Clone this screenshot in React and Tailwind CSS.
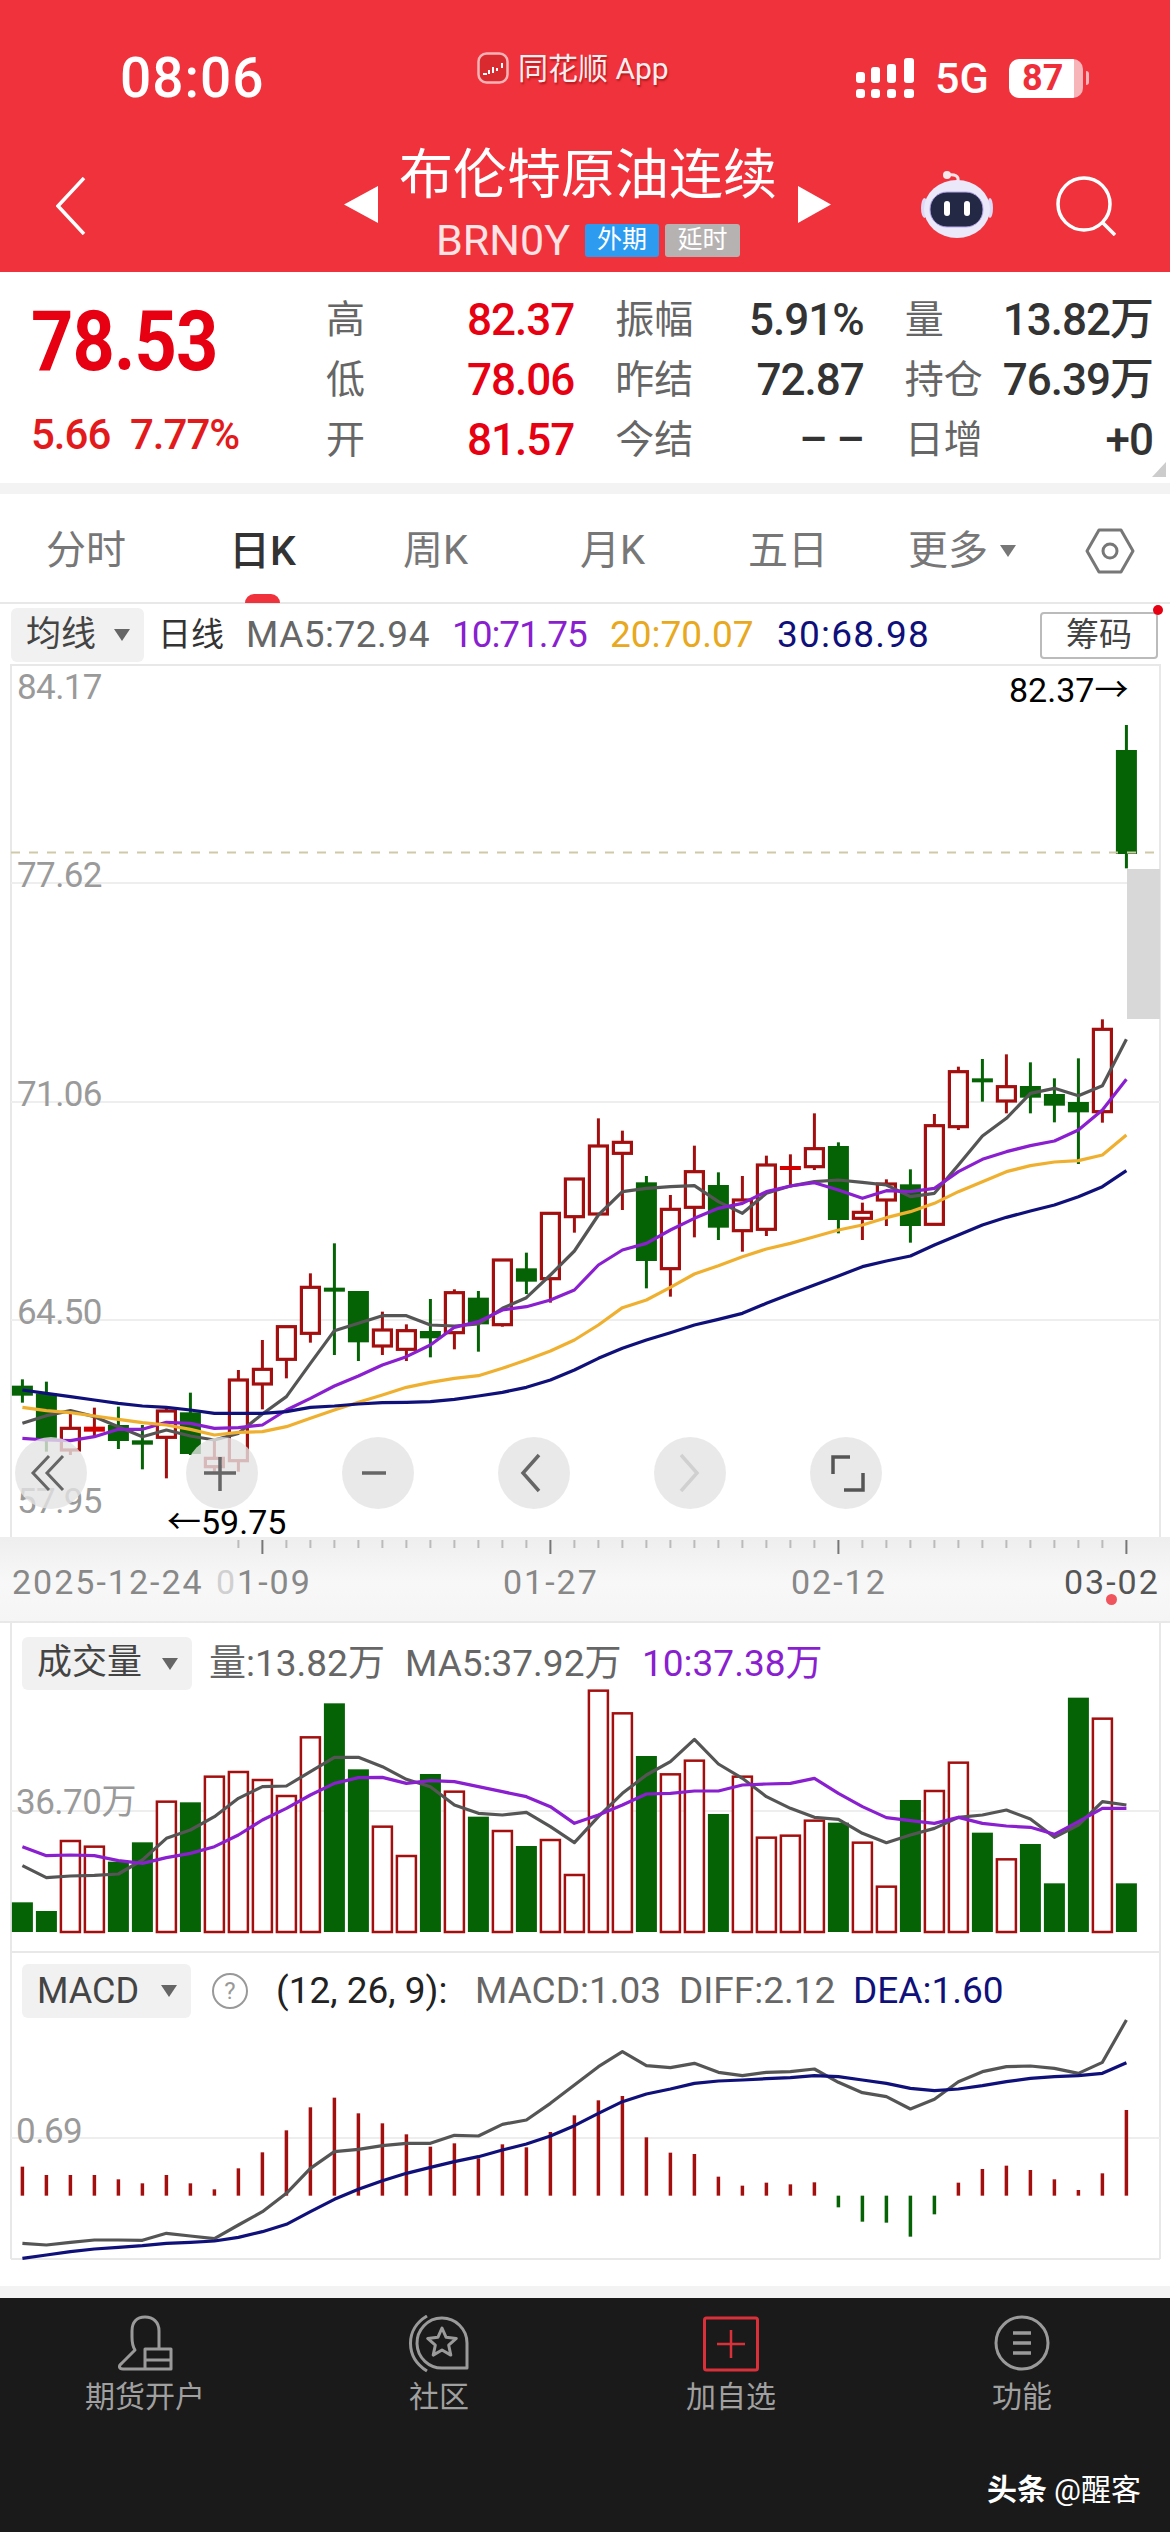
import React from "react";

const RED = "#a30f0f";
const GREEN = "#056205";
const GRAY_LINE = "#555555";
const PURPLE = "#8a1fd0";
const ORANGE = "#efb030";
const NAVY = "#10107a";

// candle x on the page
const cx = (i) => 22.4 + 24 * i;

// [type, wickTop, bodyTop, bodyBottom, wickBottom], y = 1150 + v / 3
const candles = [
    ["g", 688, 707, 737, 758], ["g", 695, 730, 870, 905], ["r", 790, 835, 900, 915], ["f", 773, 830, 845, 858],
    ["g", 770, 825, 873, 897], ["g", 825, 871, 884, 958], ["r", 775, 783, 862, 985], ["g", 728, 787, 912, 915],
    ["r", 870, 925, 950, 965], ["r", 660, 690, 932, 965], ["r", 570, 658, 702, 778], ["r", 530, 530, 628, 685],
    ["r", 370, 412, 550, 578], ["g", 280, 413, 425, 615], ["g", 423, 423, 577, 633], ["r", 485, 540, 588, 615],
    ["r", 523, 542, 598, 633], ["g", 447, 543, 565, 622], ["r", 418, 428, 548, 598], ["g", 423, 443, 523, 605],
    ["r", 330, 330, 524, 530], ["g", 308, 355, 395, 432], ["r", 188, 190, 386, 458], ["r", 85, 87, 200, 248],
    ["r", -95, -12, 192, 192], ["r", -58, -23, 10, 180], ["g", 78, 97, 333, 415], ["r", 135, 178, 356, 440],
    ["r", -13, 65, 172, 262], ["g", 67, 105, 233, 270], ["r", 78, 150, 242, 305], ["r", 17, 45, 238, 258],
    ["f", 13, 48, 60, 112], ["r", -110, -4, 50, 60], ["g", -23, -12, 210, 250], ["r", 158, 187, 205, 270],
    ["r", 88, 102, 150, 228], ["g", 58, 103, 228, 278], ["r", -108, -73, 223, 223], ["r", -250, -235, -70, -60],
    ["g", -273, -215, -203, -145], ["r", -287, -190, -147, -110], ["g", -263, -192, -157, -110], ["g", -215, -168, -133, -83],
    ["g", -275, -144, -113, 42], ["r", -392, -362, -115, -82], ["g", -1275, -1200, -888, -845],
];

const ma5 = [820, 797, 782, 800, 830, 860, 840, 858, 870, 850, 792, 740, 640, 542, 520, 497, 497, 525, 528, 522, 475, 443, 375, 303, 195, 125, 115, 110, 107, 155, 190, 130, 108, 95, 90, 97, 105, 140, 130, 45, -42, -95, -170, -185, -163, -193, -332];
const ma10 = [865, 870, 872, 860, 838, 838, 817, 820, 835, 833, 825, 780, 745, 708, 678, 645, 620, 585, 532, 515, 480, 470, 450, 420, 345, 300, 280, 240, 205, 175, 160, 125, 108, 98, 120, 145, 122, 125, 115, 65, 28, 5, -13, -27, -60, -120, -212];
const ma20 = [772, 782, 788, 798, 808, 818, 825, 838, 855, 847, 845, 830, 805, 780, 757, 735, 712, 697, 685, 677, 655, 630, 603, 570, 525, 473, 450, 412, 372, 347, 320, 297, 280, 260, 240, 225, 203, 185, 160, 125, 95, 65, 47, 36, 32, 15, -45];
const ma30 = [720, 730, 740, 750, 760, 768, 772, 780, 790, 790, 790, 785, 772, 768, 762, 758, 757, 755, 748, 738, 727, 712, 690, 660, 625, 595, 570, 548, 525, 508, 490, 460, 432, 405, 378, 350, 333, 318, 285, 255, 225, 202, 183, 165, 140, 110, 62];

// y = 1620 + v / 3
const volumes = [
    ["g", 847], ["g", 873], ["r", 663], ["r", 680], ["g", 725], ["g", 667], ["r", 545], ["g", 547], ["r", 470], ["r", 456], ["r", 480], ["r", 528],
    ["r", 352], ["g", 250], ["g", 448], ["r", 620], ["r", 708], ["g", 462], ["r", 515], ["g", 590], ["r", 633], ["g", 678], ["r", 660], ["r", 765],
    ["r", 212], ["r", 280], ["g", 408], ["r", 463], ["r", 422], ["g", 582], ["r", 470], ["r", 653], ["r", 647], ["r", 602], ["g", 608], ["r", 668],
    ["r", 800], ["g", 540], ["r", 513], ["r", 428], ["g", 638], ["r", 718], ["g", 672], ["g", 790], ["g", 233], ["r", 296], ["g", 790],
];
const volMa5 = [737, 773, 768, 766, 762, 720, 655, 630, 590, 535, 500, 498, 455, 412, 412, 440, 478, 500, 555, 580, 585, 577, 620, 668, 590, 520, 465, 425, 358, 432, 475, 530, 565, 592, 598, 640, 668, 645, 625, 592, 585, 570, 597, 652, 615, 545, 555];
const volMa10 = [680, 707, 705, 707, 722, 730, 713, 700, 680, 645, 600, 565, 525, 490, 473, 472, 490, 482, 485, 500, 515, 530, 560, 610, 585, 555, 522, 520, 513, 513, 495, 492, 490, 475, 520, 560, 593, 602, 610, 592, 610, 618, 622, 643, 605, 565, 565];

// y = 1930 + v / 3
const macdBars = [710, 735, 735, 735, 748, 760, 735, 760, 778, 715, 667, 601, 532, 503, 550, 580, 613, 650, 640, 685, 643, 652, 606, 556, 511, 498, 622, 668, 672, 740, 767, 758, 763, 757, 832, 875, 878, 920, 853, 758, 717, 707, 720, 748, 780, 730, 540];
const diff = [940, 945, 937, 930, 930, 931, 910, 918, 926, 885, 845, 790, 715, 665, 658, 647, 640, 640, 616, 618, 583, 570, 520, 465, 410, 365, 407, 413, 400, 427, 437, 427, 425, 417, 457, 488, 500, 537, 508, 455, 425, 410, 408, 415, 430, 397, 270];
const dea = [985, 975, 965, 957, 952, 947, 940, 937, 933, 922, 905, 883, 845, 808, 778, 752, 730, 712, 695, 680, 660, 642, 618, 587, 550, 515, 492, 477, 460, 453, 450, 446, 443, 437, 440, 450, 460, 475, 482, 477, 467, 455, 445, 440, 437, 430, 398];

const Line = ({ values, base, color, width = 3.2 }) => (
    <polyline
        points={values.map((v, i) => `${cx(i)},${base + v / 3}`).join(" ")}
        fill="none"
        stroke={color}
        strokeWidth={width}
        strokeLinejoin="round"
    />
);

const Frame = ({ top, bottom }) => (
    <path d={`M11 ${bottom}V${top}H1160V${bottom}`} fill="none" stroke="#e8e8e8" strokeWidth="2" />
);

const Caret = ({ color = "#666666" }) => (
    <svg width="16" height="14" viewBox="0 0 16 14"><path d="M0 1h16L8 13z" fill={color} /></svg>
);

const Dropdown = ({ label, className }) => (
    <div className={`flex items-center justify-between rounded-md bg-[#f1f1f1] pl-[15px] pr-[14px] text-[#444444] ${className}`}>
        <span>{label}</span>
        <Caret />
    </div>
);

const StatusBar = () => (
    <div className="flex h-[130px] items-center pt-[26px] text-white">
        <div className="w-[477px] pl-[120px] text-[55px] font-medium tracking-[1px]">08:06</div>
        <div className="-mt-[20px] flex items-center">
            <svg width="32" height="32" viewBox="0 0 32 32">
                <rect x="1.5" y="1.5" width="29" height="29" rx="8" fill="#d92a30" stroke="#f6b4b6" strokeWidth="2.5" />
                <path d="M6 22h4M12 22v-4M16 21v-6M20 16v3M25 11v5" stroke="#ffffff" strokeWidth="2" />
            </svg>
            <span className="ml-[9px] w-[147px] text-[30px] whitespace-nowrap text-[#ffeef0] [text-shadow:1px_2px_2px_rgba(120,0,0,0.5)]">同花顺 App</span>
        </div>
        <svg className="ml-[191px]" width="58" height="40" viewBox="0 0 58 40" fill="#ffffff">
            <rect x="0" y="14" width="9" height="11" rx="3" /><rect x="0" y="31" width="9" height="9" rx="3" />
            <rect x="15" y="9" width="9" height="16" rx="3" /><rect x="15" y="31" width="9" height="9" rx="3" />
            <rect x="31" y="6" width="9" height="19" rx="3" /><rect x="31" y="31" width="9" height="9" rx="3" />
            <rect x="48" y="0" width="10" height="25" rx="3" /><rect x="48" y="31" width="10" height="9" rx="3" />
        </svg>
        <span className="ml-[21px] w-[52px] text-[43px] font-medium">5G</span>
        <div className="ml-[22px] flex items-center">
            <div className="flex h-[39px] w-[74px] items-center rounded-[10px] bg-[linear-gradient(90deg,#ffffff_88%,#f7b5b9_88%)] pl-[13px] text-[36px] font-bold text-[#ee2f39]">87</div>
            <div className="ml-[3px] h-[14px] w-[3px] rounded-r-full bg-[#f7b5b9]" />
        </div>
    </div>
);

const NavBar = () => (
    <div className="flex h-[142px] items-start text-white">
        <svg className="ml-[56px] mt-[47px]" width="30" height="58" viewBox="0 0 30 58">
            <path d="M28 1L2 29l26 28" fill="none" stroke="#ffffff" strokeWidth="3.5" />
        </svg>
        <svg className="ml-[258px] mt-[56px]" width="34" height="37" viewBox="0 0 34 37"><path d="M34 0v37L0 18.5z" fill="#ffffff" /></svg>
        <div className="mt-[15px] flex w-[420px] flex-col items-center">
            <div className="h-[62px] text-[54px] leading-[62px] whitespace-nowrap">布伦特原油连续</div>
            <div className="mt-[15px] flex h-[36px] items-center">
                <span className="w-[149px] text-[43px] text-[#ffe3e4]">BRN0Y</span>
                <span className="flex h-[33px] w-[74px] items-center justify-center rounded-[3px] bg-[#2d9cf0] text-[25px]">外期</span>
                <span className="ml-[6px] flex h-[33px] w-[75px] items-center justify-center rounded-[3px] bg-[#b7b2b2] text-[25px]">延时</span>
            </div>
        </div>
        <svg className="mt-[56px]" width="33" height="37" viewBox="0 0 33 37"><path d="M0 0v37l33-18.5z" fill="#ffffff" /></svg>
        <svg className="ml-[90px] mt-[38px]" width="72" height="72" viewBox="0 0 72 72">
            <path d="M37 13c1-5-3-7-10-6" fill="none" stroke="#f6e3e8" strokeWidth="3" />
            <circle cx="26" cy="7" r="4" fill="#f8e9ec" />
            <ellipse cx="3.5" cy="40" rx="3.5" ry="10" fill="#ddd8f5" />
            <ellipse cx="69" cy="40" rx="3" ry="10" fill="#ddd8f5" />
            <ellipse cx="36" cy="41" rx="33" ry="29" fill="#ebe8fa" />
            <rect x="9" y="24" width="53" height="35" rx="17" fill="#232945" stroke="#b8a8ec" strokeWidth="1" />
            <rect x="23" y="33" width="6" height="15" rx="3" fill="#ffffff" />
            <rect x="43" y="33" width="6" height="15" rx="3" fill="#ffffff" />
        </svg>
        <svg className="ml-[63px] mt-[46px]" width="60" height="60" viewBox="0 0 60 60">
            <circle cx="28" cy="28" r="26" fill="none" stroke="#ffffff" strokeWidth="3.5" />
            <path d="M46 46l13 13" stroke="#ffffff" strokeWidth="3.5" />
        </svg>
    </div>
);

const statRows = [
    [["高", "82.37"], ["振幅", "5.91%"], ["量", "13.82万"]],
    [["低", "78.06"], ["昨结", "72.87"], ["持仓", "76.39万"]],
    [["开", "81.57"], ["今结", "– –"], ["日增", "+0"]],
];

const Quote = () => (
    <div className="relative flex h-[211px] bg-white">
        <div className="w-[326px] pl-[31px]">
            <div className="mt-[29px] h-[82px] origin-left scale-x-[0.89] text-[83px] leading-[82px] font-bold tracking-[-1px] text-[#e60012]">78.53</div>
            <div className="mt-[29px] flex text-[42px] leading-[46px] font-medium tracking-[-1px] text-[#e31a1c]">
                <span className="w-[99px]">5.66</span>
                <span>7.77%</span>
            </div>
        </div>
        <div className="grid h-fit w-[827px] grid-cols-3 gap-x-[41px] pt-[18px]">
            {statRows.flat().map(([label, value], i) => (
                <div key={label} className="flex h-[60px] items-center justify-between">
                    <span className="text-[39px] text-[#666666]">{label}</span>
                    <span className={`text-[44px] font-medium tracking-[-1px] ${i % 3 === 0 ? "text-[#e60012]" : "text-[#333333]"}`}>{value}</span>
                </div>
            ))}
        </div>
        <div className="absolute right-[4px] bottom-[6px] h-0 w-0 border-b-[15px] border-l-[14px] border-b-[#cccccc] border-l-transparent" />
    </div>
);

const Tabs = () => (
    <div className="flex h-[110px] border-b-2 border-[#e8e8e8] bg-white pt-[35px] text-[40px] leading-[44px] text-[#777777]">
        <span className="ml-[46px] w-[82px]">分时</span>
        <div className="relative ml-[101px] w-[69px] whitespace-nowrap text-[41px] font-medium text-[#333333]">
            日K
            <div className="absolute top-[65px] left-[16px] h-[9px] w-[35px] rounded-t-full bg-[#f0323c]" />
        </div>
        <span className="ml-[105px] w-[68px] whitespace-nowrap">周K</span>
        <span className="ml-[109px] w-[67px] whitespace-nowrap">月K</span>
        <span className="ml-[101px] w-[76px] whitespace-nowrap">五日</span>
        <span className="ml-[84px] w-[80px] whitespace-nowrap">更多</span>
        <div className="ml-[12px] flex h-[44px] items-center"><Caret color="#777777" /></div>
        <svg className="ml-[69px] -mt-[1px]" width="50" height="46" viewBox="0 0 50 46">
            <path d="M14 2h22l12 21-12 21H14L2 23z" fill="none" stroke="#777777" strokeWidth="3" strokeLinejoin="round" />
            <circle cx="25" cy="23" r="7" fill="none" stroke="#777777" strokeWidth="3" />
        </svg>
    </div>
);

const Toolbar = () => (
    <div className="relative flex h-[60px] items-center whitespace-nowrap bg-white pt-[2px] text-[37px]">
        <Dropdown label="均线" className="ml-[11px] h-[54px] w-[133px] text-[35px]" />
        <span className="ml-[14px] w-[88px] text-[33px] text-[#333333]">日线</span>
        <span className="w-[206px] tracking-[0.5px] text-[#666666]">MA5:72.94</span>
        <span className="w-[158px] tracking-[-1.1px] text-[#8a1fd0]">10:71.75</span>
        <span className="w-[167px] text-[#e8a820]">20:70.07</span>
        <span className="tracking-[1.2px] text-[#10107a]">30:68.98</span>
        <div className="ml-auto mr-[12px] flex h-[47px] w-[118px] items-center justify-center rounded-[4px] border-2 border-[#bbbbbb] text-[33px] text-[#444444]">筹码</div>
        <div className="absolute top-[1px] right-[7px] h-[10px] w-[10px] rounded-full bg-[#e60012]" />
    </div>
);

const Candle = ({ c, i }) => {
    const [type, wt, bt, bb, wb] = c;
    const y = (v) => 1150 + v / 3;
    const x = cx(i);
    const color = type === "g" ? GREEN : RED;
    return (
        <g>
            <path d={`M${x} ${y(wt)}V${y(wb)}`} stroke={color} strokeWidth="3" />
            {type === "r" ? (
                <rect x={x - 9} y={y(bt)} width="18" height={y(bb) - y(bt)} fill="#ffffff" stroke={color} strokeWidth="3.2" />
            ) : (
                <rect x={x - 10.5} y={y(bt)} width="21" height={y(bb) - y(bt)} fill={type === "f" ? "#d40000" : color} />
            )}
        </g>
    );
};

const chartButtons = [
    <path key="a" d="M24 9L8 26l16 17M38 9L22 26l16 17" fill="none" stroke="#666666" strokeWidth="3" />,
    <path key="b" d="M8 26h32M24 10v34" fill="none" stroke="#666666" strokeWidth="3.5" />,
    <path key="c" d="M10 26h24" fill="none" stroke="#666666" strokeWidth="3.5" />,
    <path key="d" d="M31 8L15 26l16 18" fill="none" stroke="#666666" strokeWidth="3.5" />,
    <path key="e" d="M17 8l16 18-16 18" fill="none" stroke="#d0d0d0" strokeWidth="3.5" />,
    <path key="f" d="M30 10H13v17M43 26v17H24" fill="none" stroke="#555555" strokeWidth="3.5" />,
];

const PriceLabel = ({ className, children }) => (
    <span className={`absolute left-[17px] text-[35px] leading-[40px] tracking-[-0.6px] text-[#9a9a9a] ${className}`}>{children}</span>
);

const KChart = () => (
    <div className="relative h-[873px] bg-white">
        <svg className="absolute inset-0" width="1170" height="873" viewBox="0 664 1170 873">
            <Frame top={665} bottom={1537} />
            <path d="M11 883H1160M11 1102H1160M11 1320H1160" stroke="#eeeeee" strokeWidth="2" />
            <rect x="1127" y="869" width="33" height="150" fill="#d8d8d8" />
            {candles.map((c, i) => <Candle key={i} c={c} i={i} />)}
            <Line values={ma5} base={1150} color={GRAY_LINE} />
            <Line values={ma10} base={1150} color={PURPLE} />
            <Line values={ma20} base={1150} color={ORANGE} />
            <Line values={ma30} base={1150} color={NAVY} />
            <path d="M11 852.5H1156" stroke="#cfc9a8" strokeWidth="2" strokeDasharray="9 9" />
        </svg>
        <PriceLabel className="top-[4px]">84.17</PriceLabel>
        <PriceLabel className="top-[192px]">77.62</PriceLabel>
        <PriceLabel className="top-[411px]">71.06</PriceLabel>
        <PriceLabel className="top-[629px]">64.50</PriceLabel>
        <PriceLabel className="top-[818px]">57.95</PriceLabel>
        <span className="absolute top-[6px] left-[1009px] text-[34px] leading-[40px] whitespace-nowrap text-black">82.37→</span>
        <span className="absolute top-[838px] left-[167px] text-[34px] leading-[40px] whitespace-nowrap text-black">←59.75</span>
        <div className="absolute top-[773px] left-[15px] flex gap-x-[84px]">
            {chartButtons.map((icon, i) => (
                <div key={icon.key} className={`flex h-[72px] w-[72px] items-center justify-center rounded-full bg-[#e4e4e4]/80 ${i === 0 ? "mr-[15px]" : ""}`}>
                    <svg width="52" height="52" viewBox="0 0 52 52">{icon}</svg>
                </div>
            ))}
        </div>
    </div>
);

const DateAxis = () => (
    <div className="relative h-[86px] border-b-2 border-[#e8e8e8] bg-[linear-gradient(180deg,#eeeeee,#f8f8f8_55%,#f5f5f5)] text-[34px] tracking-[2px] text-[#888888]">
        <svg className="absolute inset-0" width="1170" height="20" viewBox="0 0 1170 20">
            {candles.map((_, i) => {
                if (i < 9) return null;
                const big = i === 10 || i === 22 || i === 34 || i === 46;
                return <path key={i} d={`M${cx(i)} 3V${big ? 17 : 11}`} stroke={big ? "#777777" : "#bbbbbb"} strokeWidth="2" />;
            })}
        </svg>
        <div className="flex pt-[20px] whitespace-nowrap">
            <span className="ml-[12px] w-[190px]">2025-12-24</span>
            <span className="ml-[14px] w-[93px]"><span className="text-[#d0d0d0]">0</span>1-09</span>
            <span className="ml-[194px] w-[94px]">01-27</span>
            <span className="ml-[194px] w-[94px]">02-12</span>
            <span className="ml-[179px] w-[93px] text-[#555555]">03-02</span>
        </div>
        <div className="absolute top-[57px] left-[1106px] h-[11px] w-[11px] rounded-full bg-[#f0555e]" />
    </div>
);

const VolumePanel = () => (
    <div className="relative h-[328px] bg-white pt-[14px]">
        <svg className="absolute inset-0" width="1170" height="328" viewBox="0 1623 1170 328">
            <path d="M11 1623V1951M1160 1623V1951" stroke="#e8e8e8" strokeWidth="2" />
            <path d="M11 1811H1160" stroke="#eeeeee" strokeWidth="2" />
            {volumes.map(([type, top], i) => {
                const y = 1620 + top / 3;
                return type === "r" ? (
                    <rect key={i} x={cx(i) - 9.5} y={y} width="19" height={1932 - y} fill="#ffffff" stroke={RED} strokeWidth="2.5" />
                ) : (
                    <rect key={i} x={cx(i) - 10.5} y={y} width="21" height={1932 - y} fill={GREEN} />
                );
            })}
            <Line values={volMa5} base={1620} color={GRAY_LINE} />
            <Line values={volMa10} base={1620} color={PURPLE} />
        </svg>
        <div className="relative flex h-[53px] items-center whitespace-nowrap text-[37px] text-[#666666]">
            <Dropdown label="成交量" className="ml-[22px] h-[53px] w-[170px] text-[35px]" />
            <span className="ml-[17px] w-[196px]">量:13.82万</span>
            <span className="w-[237px]">MA5:37.92万</span>
            <span className="text-[#8a1fd0]">10:37.38万</span>
        </div>
        <span className="absolute top-[160px] left-[16px] text-[35px] leading-[40px] tracking-[-0.5px] text-[#9a9a9a]">36.70万</span>
    </div>
);

const MacdPanel = () => (
    <div className="relative h-[309px] bg-white pt-[13px]">
        <svg className="absolute inset-0" width="1170" height="309" viewBox="0 1951 1170 309">
            <Frame top={1952} bottom={2259} />
            <path d="M11 2259H1160" stroke="#e8e8e8" strokeWidth="2" />
            <path d="M11 2138H1160" stroke="#eeeeee" strokeWidth="2" />
            {macdBars.map((v, i) => {
                const neg = v > 800;
                return (
                    <path
                        key={i}
                        d={`M${cx(i)} ${1930 + 797 / 3}V${1930 + v / 3}`}
                        stroke={neg ? GREEN : RED}
                        strokeWidth="3.5"
                    />
                );
            })}
            <Line values={diff} base={1930} color={GRAY_LINE} />
            <Line values={dea} base={1930} color={NAVY} />
        </svg>
        <div className="relative flex h-[54px] items-center whitespace-nowrap text-[37px] text-[#666666]">
            <Dropdown label="MACD" className="ml-[22px] h-[54px] w-[169px] text-[36px]" />
            <div className="ml-[21px] flex h-[36px] w-[36px] items-center justify-center rounded-full border-2 border-[#999999] text-[24px] text-[#999999]">?</div>
            <span className="ml-[28px] w-[199px] text-[#222222]">(12, 26, 9):</span>
            <span className="w-[204px]">MACD:1.03</span>
            <span className="w-[174px]">DIFF:2.12</span>
            <span className="text-[#10107a]">DEA:1.60</span>
        </div>
        <span className="absolute top-[161px] left-[16px] text-[35px] leading-[40px] tracking-[-0.5px] text-[#9a9a9a]">0.69</span>
    </div>
);

const footerItems = [
    {
        label: "期货开户",
        width: 56,
        icon: (
            <g fill="none" stroke="#9a9a9a" strokeWidth="3" strokeLinejoin="round">
                <path d="M42 33V16C42 7 36 2 28 2S15 7 15 16V22C15 28 16 32 18 35L5 48C1 51 2 54 6 54H54V34H28V54M28 45H54" />
            </g>
        ),
    },
    {
        label: "社区",
        width: 60,
        icon: (
            <g fill="none" stroke="#9a9a9a" strokeWidth="3" strokeLinejoin="round">
                <path d="M18 1C-4 14-4 42 18 56" />
                <path d="M58 53H34A25 25 0 1 1 58 28Z" />
                <path d="M33 13L37.100 22.300 47.300 23.400 39.700 30.200 41.800 40.100 33 35 24.200 40.100 26.300 30.200 18.700 23.400 28.900 22.300Z" />
            </g>
        ),
    },
    {
        label: "加自选",
        width: 56,
        icon: (
            <g fill="none" stroke="#d9303a">
                <rect x="1.500" y="3" width="53" height="52" rx="2" strokeWidth="3" />
                <path d="M28 15v28M14 29h28" strokeWidth="2.5" />
            </g>
        ),
    },
    {
        label: "功能",
        width: 56,
        icon: (
            <g fill="none" stroke="#9a9a9a" strokeWidth="3">
                <circle cx="28" cy="28" r="26" />
                <path d="M19 18h18M19 28h18M19 38h18" strokeWidth="3.5" />
            </g>
        ),
    },
];

const Footer = () => (
    <div className="relative grow bg-[#1a1a1a]">
        <div className="grid grid-cols-[290px_298px_286px_296px] pt-[17px]">
            {footerItems.map((item) => (
                <div key={item.label} className="flex flex-col items-center">
                    <svg width={item.width} height="58" viewBox={`0 0 ${item.width} 58`}>{item.icon}</svg>
                    <span className="mt-[4px] text-[30px] leading-[40px] text-[#a0a0a0]">{item.label}</span>
                </div>
            ))}
        </div>
        <div className="absolute top-[174px] right-[29px] flex items-center text-[30px] leading-[36px] text-white">
            <span className="font-bold">头条</span>
            <span className="ml-[7px]">@醒客</span>
        </div>
    </div>
);

const App = () => {
    return (
        <div className="flex h-[2532px] w-[1170px] flex-col overflow-hidden bg-white font-[Roboto,'Noto_Sans_CJK_SC',sans-serif]">
            <div className="h-[272px] bg-[#f0323c]">
                <StatusBar />
                <NavBar />
            </div>
            <Quote />
            <div className="h-[11px] bg-[#f3f3f3]" />
            <Tabs />
            <Toolbar />
            <KChart />
            <DateAxis />
            <VolumePanel />
            <MacdPanel />
            <div className="h-[26px] bg-white" />
            <div className="h-[12px] bg-[#f3f3f3]" />
            <Footer />
        </div>
    );
};

export default App;
